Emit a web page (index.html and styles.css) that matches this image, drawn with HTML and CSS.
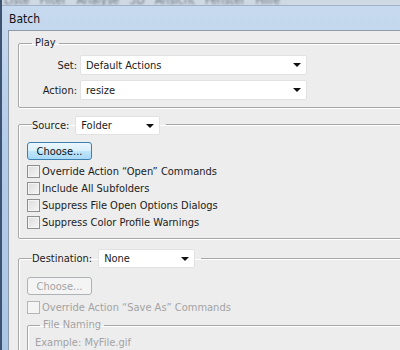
FILE: index.html
```html
<!DOCTYPE html>
<html lang="en">
<head>
  <meta charset="UTF-8" />
  <title>Batch</title>
  <link rel="stylesheet" href="styles.css">
</head>
<body>

<div class="menubar"><span>Liste&nbsp;&nbsp;&nbsp;Filter&nbsp;&nbsp;&nbsp;Analyse&nbsp;&nbsp;&nbsp;3D&nbsp;&nbsp;&nbsp;Ansicht&nbsp;&nbsp;&nbsp;Fenster&nbsp;&nbsp;&nbsp;Hilfe</span></div>

<div class="window">
  <div class="titlebar">Batch</div>

  <div class="client">
    <fieldset class="group play">
      <legend class="caption">Play</legend>
      <div class="rows">
        <label class="row-label">Set:</label>
        <span class="dropdown wide">Default Actions</span>
        <label class="row-label">Action:</label>
        <span class="dropdown wide">resize</span>
      </div>
    </fieldset>

    <fieldset class="group source">
      <legend class="picker">
        <span class="picker-label">Source:</span>
        <span class="dropdown source-dd">Folder</span>
      </legend>
      <button class="btn">Choose...</button>
      <ul class="checks">
        <li><span class="box"></span>Override Action “Open” Commands</li>
        <li><span class="box"></span>Include All Subfolders</li>
        <li><span class="box"></span>Suppress File Open Options Dialogs</li>
        <li><span class="box"></span>Suppress Color Profile Warnings</li>
      </ul>
    </fieldset>

    <fieldset class="group dest">
      <legend class="picker">
        <span class="picker-label">Destination:</span>
        <span class="dropdown dest-dd">None</span>
      </legend>
      <button class="btn" disabled>Choose...</button>
      <ul class="checks disabled">
        <li><span class="box"></span>Override Action “Save As” Commands</li>
      </ul>
      <fieldset class="group naming">
        <legend class="caption muted">File Naming</legend>
        <p class="example">Example: MyFile.gif</p>
      </fieldset>
    </fieldset>
  </div>
</div>

</body>
</html>
```

FILE: styles.css
```css
* {
  box-sizing: border-box;
}

body {
  margin: 0;
  background: #3e5372;
  font-family: "DejaVu Sans Condensed", "DejaVu Sans", sans-serif;
  font-stretch: condensed;
  font-size: 11px;
  color: #1b1b1b;
  overflow: hidden;
}

.menubar {
  height: 5px;
  overflow: hidden;
  background: #cfd9e4;
  margin-left: 2px;
}

.menubar span {
  display: block;
  margin-top: -7px;
  padding-left: 2px;
  font-size: 12px;
  color: #6b7480;
  filter: blur(1px);
  white-space: nowrap;
}

.window {
  margin-left: 2px;
  width: 600px;
  background: linear-gradient(180deg, #c6d9ee 0%, #b3cce8 40%, #abc6e5 100%);
  border-top: 1px solid #9fb3c9;
}

.titlebar {
  height: 24px;
  padding: 6px 0 0 7px;
  font-size: 12px;
  color: #111;
}

.client {
  margin-left: 6px;
  height: 330px;
  background: #ededed;
  border-top: 1px solid #8f9aa8;
  border-left: 1px solid #8f9aa8;
  padding: 5px 0 0 9px;
}

.group {
  margin: 0;
  padding: 0 0 0 8px;
  width: 560px;
  border: 1px solid #a7a7a7;
  border-radius: 2px;
  box-shadow: inset 1px 1px 0 #fff, 1px 1px 0 #fff;
}

.caption {
  margin-left: 13px;
  padding: 0 3px;
  line-height: 14px;
}

.muted {
  color: #a3a3a3;
}

.picker {
  display: flex;
  align-items: center;
  gap: 6px;
  margin-left: 5px;
  padding: 0 6px 0 0;
}

.play {
  padding: 5px 0 7px 0;
}

.rows {
  display: grid;
  grid-template-columns: 58px 227px;
  column-gap: 3px;
  row-gap: 5px;
  align-items: center;
}

.row-label {
  text-align: right;
}

.dropdown {
  position: relative;
  display: block;
  height: 19px;
  line-height: 18px;
  padding-left: 5px;
  background: #fff;
  border: 1px solid #e2e2e2;
  border-radius: 2px;
}

.dropdown::after {
  content: "";
  position: absolute;
  right: 5px;
  top: 7px;
  border-left: 4px solid transparent;
  border-right: 4px solid transparent;
  border-top: 4px solid #111;
}

.wide {
  height: 20px;
  line-height: 19px;
}

.source-dd {
  width: 85px;
}

.dest-dd {
  width: 97px;
}

.source legend {
  padding-top: 2px;
}

.source {
  margin-top: 6px;
  padding-top: 7px;
  padding-bottom: 7px;
}

.dest {
  margin-top: 10px;
  padding-top: 9px;
  padding-bottom: 40px;
}

.btn {
  display: block;
  width: 65px;
  height: 18px;
  padding: 0;
  font-family: inherit;
  font-stretch: condensed;
  font-size: 11px;
  color: #111;
  background: linear-gradient(180deg, #eaf6fd 0%, #d9f0fc 50%, #bee6fd 51%, #a7d9f5 100%);
  border: 1px solid #3c7fb1;
  border-radius: 3px;
}

.btn:disabled {
  color: #a3a3a3;
  background: #f4f4f4;
  border-color: #adb2b5;
}

.checks {
  list-style: none;
  margin: 3px 0 0 0;
  padding: 0;
}

.checks li {
  display: flex;
  align-items: center;
  gap: 2px;
  height: 17px;
}

.box {
  width: 13px;
  height: 13px;
  border: 1px solid #8e8f8f;
  background: linear-gradient(135deg, #dcdcdc 0%, #f6f6f6 100%);
  box-shadow: inset 0 0 0 1px #f4f4f4;
}

.dest .checks {
  margin-top: 4px;
}

.disabled li {
  color: #a3a3a3;
}

.disabled .box {
  border-color: #b5b5b5;
  background: #f4f4f4;
}

.naming {
  margin-top: 2px;
  width: 500px;
  padding: 4px 0 10px 7px;
}

.naming .caption {
  margin-left: 5px;
}

.example {
  margin: 0;
  color: #a3a3a3;
}
```
